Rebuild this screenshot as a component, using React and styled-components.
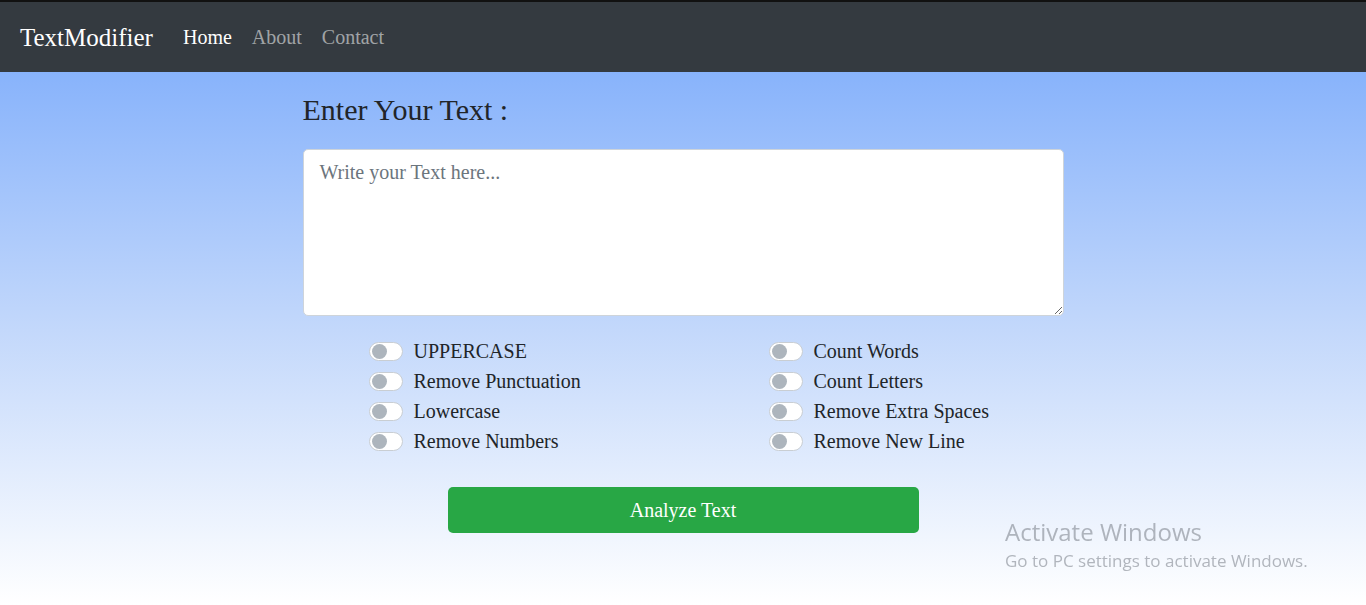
import React from "react";
import styled, { createGlobalStyle } from "styled-components";

const GlobalStyle = createGlobalStyle`
  html, body { margin: 0; padding: 0; }
  body {
    font-family: "Liberation Serif", "Times New Roman", serif;
    min-height: 605px;
    background: linear-gradient(to bottom, #88b3fb 72px, #c3d8fb 330px, #ffffff 605px);
  }
`;

const Nav = styled.nav`
  box-sizing: border-box;
  height: 72px;
  border-top: 2px solid #111;
  background: #343a40;
  display: flex;
  align-items: center;
  padding: 1px 20px 0;
  gap: 30px;
`;

const Brand = styled.span`
  color: #fff;
  font-size: 25px;
`;

const Links = styled.div`
  display: flex;
  gap: 20px;
`;

const NavLink = styled.a`
  color: ${(p) => (p.$active ? "#fff" : "rgba(255,255,255,0.55)")};
  font-size: 20px;
  text-decoration: none;
`;

const Main = styled.main`
  width: 761px;
  margin: 0 auto;
  padding-top: 20px;
`;

const Heading = styled.h1`
  margin: 0 0 21px;
  font-size: 30px;
  font-weight: 400;
  color: #212529;
  line-height: 36px;
`;

const TextArea = styled.textarea`
  display: block;
  box-sizing: border-box;
  width: 761px;
  height: 167px;
  border: 1px solid #ced4da;
  border-radius: 5px;
  padding: 11px 16px;
  font-family: "Liberation Serif", "Times New Roman", serif;
  font-size: 20px;
  color: #212529;
  background: #fff;
  &::placeholder { color: #6c757d; }
`;

const Options = styled.div`
  display: grid;
  grid-template-columns: 400px 400px;
  grid-auto-flow: column;
  grid-template-rows: repeat(4, 30px);
  padding-left: 66px;
  margin-top: 20px;
`;

const Option = styled.label`
  display: flex;
  align-items: center;
  gap: 11px;
  font-size: 20px;
  color: #212529;
`;

const Switch = styled.span`
  box-sizing: border-box;
  width: 34px;
  height: 19px;
  border: 1px solid #c9ced3;
  border-radius: 10px;
  background: #fff;
  display: flex;
  align-items: center;
  padding-left: 2px;
  &::before {
    content: "";
    width: 15px;
    height: 15px;
    border-radius: 50%;
    background: #adb5bd;
  }
`;

const Button = styled.button`
  display: block;
  width: 471px;
  height: 46px;
  margin: 31px auto 0;
  border: none;
  border-radius: 5px;
  background: #28a745;
  color: #fff;
  font-family: "Liberation Serif", "Times New Roman", serif;
  font-size: 20px;
`;

const Watermark = styled.div`
  position: fixed;
  left: 1005px;
  top: 517px;
  font-family: "Open Sans", "Noto Sans", sans-serif;
  color: rgba(120, 125, 135, 0.55);
`;

const WTitle = styled.div`
  font-size: 24px;
  line-height: 30px;
`;

const WSub = styled.div`
  font-size: 17px;
  line-height: 28px;
`;

const left = ["UPPERCASE", "Remove Punctuation", "Lowercase", "Remove Numbers"];
const right = ["Count Words", "Count Letters", "Remove Extra Spaces", "Remove New Line"];

export default function App() {
  return (
    <>
      <GlobalStyle />
      <Nav>
        <Brand>TextModifier</Brand>
        <Links>
          <NavLink $active href="#">Home</NavLink>
          <NavLink href="#">About</NavLink>
          <NavLink href="#">Contact</NavLink>
        </Links>
      </Nav>
      <Main>
        <Heading>Enter Your Text :</Heading>
        <TextArea placeholder="Write your Text here..." />
        <Options>
          {[...left, ...right].map((t) => (
            <Option key={t}>
              <Switch />
              {t}
            </Option>
          ))}
        </Options>
        <Button>Analyze Text</Button>
      </Main>
      <Watermark>
        <WTitle>Activate Windows</WTitle>
        <WSub>Go to PC settings to activate Windows.</WSub>
      </Watermark>
    </>
  );
}
